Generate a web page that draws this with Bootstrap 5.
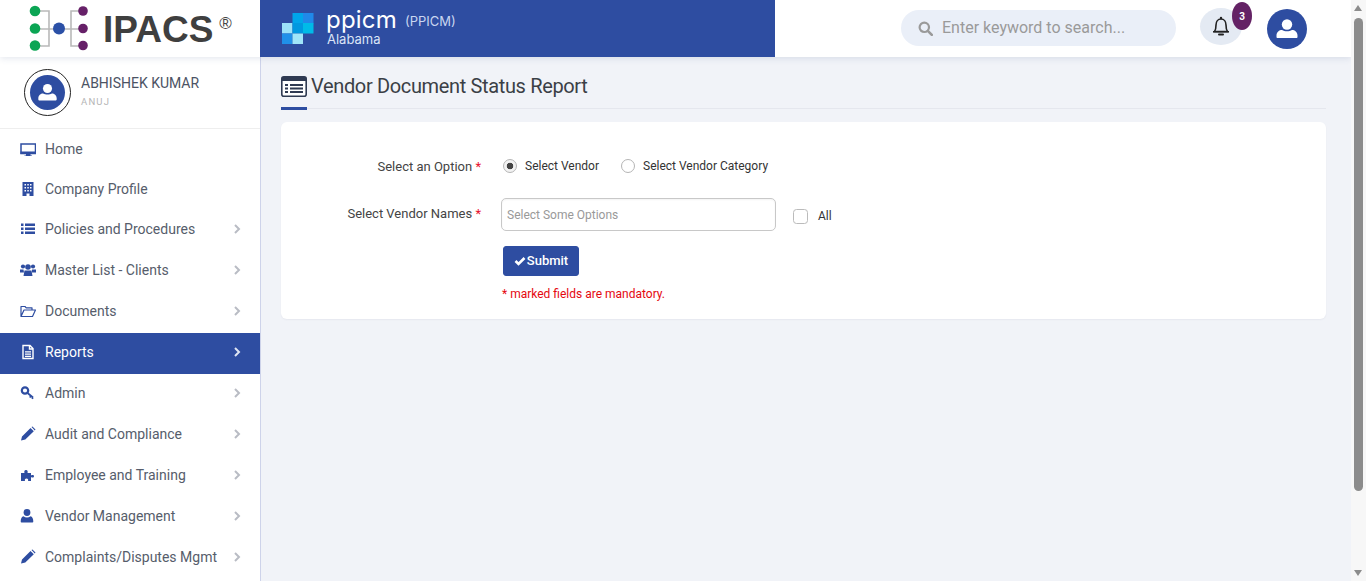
<!DOCTYPE html>
<html lang="en">
<head>
<meta charset="utf-8">
<title>Vendor Document Status Report</title>
<link href="https://cdn.jsdelivr.net/npm/bootstrap@5.3.0/dist/css/bootstrap.min.css" rel="stylesheet">
<style>
html,body{height:581px;overflow:hidden}
body{font-family:Roboto,"Liberation Sans",sans-serif;background:#f1f3f8;color:#444;font-size:14px}
.shell{height:581px}
.page-col{width:1351px;height:581px}
.top-bar{height:57px;background:#fff;box-shadow:0 2px 6px rgba(60,80,130,.12);position:relative;z-index:2}
.logo-box{width:260px;padding-left:28px;gap:5px}
.logo-word{font-family:"Liberation Sans",sans-serif;font-weight:700;font-size:37px;line-height:1;color:#3f3f3f;margin-top:1px}
.logo-reg{font-size:17px;line-height:1;color:#444;margin-top:-10px;margin-left:1px;font-family:"Liberation Sans",sans-serif}
.brand-box{width:515px;background:#2e4da1;color:#fff;padding-left:22px;gap:12px}
.brand-main{font-family:Inter,sans-serif;font-size:24px;line-height:24px;letter-spacing:.2px;margin-top:-3px}
.brand-sub{font-family:Inter,sans-serif;font-size:13px;color:#c9d6f0;margin-left:8px}
.brand-state{font-family:Inter,sans-serif;font-size:13px;line-height:14px;margin-left:1px;color:#dbe4f6}
.search-pill{width:275px;height:36px;background:#eaeff8;border-radius:18px;margin-left:126px;padding-left:17px;gap:9px;color:#9a9a9a;font-size:16px;margin-top:-1px}
.bell-wrap{width:42px;height:37px;background:#e4eaf3;border-radius:50%;margin-left:24px;margin-top:5px}
.bell-badge{position:absolute;left:32px;top:-6px;width:20px;height:28px;border-radius:50%;background:#642265;color:#fff;font-size:10px;font-weight:700;display:flex;align-items:center;justify-content:center}
.user-round{width:40px;height:40px;border-radius:50%;background:#2e4da1;margin-left:25px;margin-top:1px}
.side-col{width:261px;background:#fff;border-right:1px solid #ced3ea;height:524px}
.who{height:72px;border-bottom:1px solid #eee;padding-left:24px;gap:10px}
.who-ring{width:47px;height:47px;border:1px solid #222;border-radius:50%;background:#fff}
.who-disc{width:35px;height:35px;border-radius:50%;background:#2e4da1}
.who-name{font-size:14px;line-height:16px;color:#4c5364;margin-top:-3px}
.who-role{font-size:9.5px;letter-spacing:1.2px;color:#b5b5b5;margin-top:5px;line-height:12px}
.menu-row{height:40px;padding:0 20px;color:#565d6b;text-decoration:none;font-size:14px}
.menu-row.sub{height:41px;padding-bottom:3px}
.menu-row.first-sub{margin-top:1px}
.menu-row.on{background:#2e4da1;color:#fff}
.menu-ico{width:16px;height:16px;margin-right:9px;flex:none;color:#2e4da1}
.menu-row.on .menu-ico{color:#fff}
.menu-arrow{margin-left:auto;width:8px;height:10px;margin-right:-1px;color:#b9bcc4}
.menu-row.on .menu-arrow{color:#dfe5f4}
.work{padding:0 25px 0 20px}
.title-block{height:52px;border-bottom:1px solid #e5e7ee;position:relative;padding-top:15px;gap:4px}
.title-block::after{content:"";position:absolute;left:0;bottom:-2px;width:26px;height:3px;background:#2e4da1}
.title-text{font-size:20px;line-height:28px;color:#3b3f46;letter-spacing:-.35px}
.form-panel{border:0;border-radius:6px;margin-top:13px;height:197px;box-shadow:0 1px 2px rgba(60,70,110,.06);padding:0}
.lbl{width:200px;text-align:right;color:#444;font-size:13px;flex:none}
.req{color:#e8112d}
.opt-row{padding-top:32px;height:76px}
.opt-label{padding-top:5px;line-height:16px}
.opt-radio{margin:3px 0 0 22px;height:22px;gap:8px;font-size:12px;color:#333}
.opt-radio .form-check-input{width:14px;height:14px;margin:2px 0 0;border:1px solid #b5b5b5;background:#fff;box-shadow:none;flex:none}
.opt-radio .form-check-input:checked{background:radial-gradient(circle,#444 0 3px,#f2f2f2 3.6px);border-color:#b5b5b5}
.names-label{padding-top:8px;line-height:16px}
.names-box{width:275px;height:33px;margin-left:20px;border:1px solid #c8c8c8;border-radius:5px;background:#fff;color:#999;font-size:12px;padding:0 5px;box-shadow:inset 0 1px 2px rgba(0,0,0,.05)}
.all-check{width:15px;height:15px;margin:11px 0 0 17px;border:1px solid #bbb;border-radius:1px;background:#fff;box-shadow:none}
.all-label{font-size:12px;margin:10px 0 0 10px;line-height:16px;color:#333}
.go-btn{margin:15px 0 0 222px;width:76px;height:30px;background:#2e4da1;border-color:#2e4da1;color:#fff;font-size:13px;font-weight:500;padding:0;gap:1px;border-radius:3px}
.must{font-size:12px;color:#e5080f;margin:10px 0 0 221px;line-height:16px}
.fake-bar{width:15px;height:581px;background:#f7f7f7;position:relative;z-index:3;flex:none}
.bar-thumb{width:9px;height:473px;background:#8c8c8c;border-radius:5px;margin:18px 0 0 3px}
.bar-up,.bar-down{position:absolute;left:3px;width:0;height:0;border-left:4.5px solid transparent;border-right:4.5px solid transparent}
.bar-up{top:5px;border-bottom:6px solid #8c8c8c}
.bar-down{bottom:5px;border-top:6px solid #8c8c8c}
</style>
</head>
<body>
<svg width="0" height="0" class="position-absolute">
<defs>
<symbol id="i-next" viewBox="0 0 8 10"><path d="M2 1l4 4-4 4" fill="none" stroke="currentColor" stroke-width="2"/></symbol>
<symbol id="i-person" viewBox="0 0 24 24"><circle cx="12" cy="7.5" r="5.2" fill="#fff"/><path d="M2.5 21c-.5 0-1-.4-1-1v-1.500c0-3.500 2.800-5.500 5.500-5.500 1.500.8 3 1.300 5 1.300s3.500-.5 5-1.300c2.700 0 5.500 2 5.500 5.500V20c0 .6-.5 1-1 1z" fill="#fff"/></symbol>
</defs>
</svg>
<div class="shell d-flex">
<div class="page-col d-flex flex-column">
<header class="top-bar d-flex flex-none">
  <div class="logo-box d-flex align-items-center">
    <svg width="70" height="50" viewBox="0 0 70 50" class="flex-none">
      <g fill="none" stroke="#b9b9b9" stroke-width="1.600">
        <path d="M7 7h14v35H7M7 25h50M57 7H43v35h14"/>
      </g>
      <g fill="#0ba554"><circle cx="7" cy="7" r="5.300"/><circle cx="7" cy="24.500" r="5.300"/><circle cx="7" cy="41.500" r="5.300"/></g>
      <circle cx="31" cy="24.500" r="6" fill="#2b50a6"/>
      <g fill="#662068"><circle cx="55" cy="7" r="4.800"/><circle cx="55" cy="24.500" r="4.800"/><circle cx="55" cy="41.500" r="4.800"/></g>
    </svg>
    <span class="logo-word">IPACS</span><span class="logo-reg">®</span>
  </div>
  <div class="brand-box d-flex align-items-center">
    <svg width="32" height="31" viewBox="0 0 32 31" class="flex-none">
      <rect x="10.500" width="10.500" height="10.500" fill="#00a5ea"/><rect x="21" width="10.500" height="10.500" fill="#2089e9"/>
      <rect y="10" width="10.500" height="10.500" fill="#9be2f9"/><rect x="10.500" y="10" width="10.500" height="10.500" fill="#0098e0"/><rect x="21" y="10" width="10.500" height="10.500" fill="#00bbe8"/>
      <rect y="20.500" width="10.500" height="10.500" fill="#2090e9"/><rect x="10.500" y="20.500" width="10.500" height="10.500" fill="#a0e5f9"/>
    </svg>
    <div>
      <div class="d-flex align-items-center"><span class="brand-main">ppicm</span><span class="brand-sub">(PPICM)</span></div>
      <div class="brand-state">Alabama</div>
    </div>
  </div>
  <div class="search-pill d-flex align-items-center align-self-center">
    <svg width="15" height="15" viewBox="0 0 15 15" class="flex-none"><circle cx="6.300" cy="6.300" r="4.700" fill="none" stroke="#9a9a9a" stroke-width="2.200"/><path d="M9.800 9.800l4 4" stroke="#9a9a9a" stroke-width="2.600" stroke-linecap="round"/></svg>
    <span>Enter keyword to search...</span>
  </div>
  <div class="bell-wrap position-relative align-self-start mt-2 d-flex align-items-center justify-content-center flex-none">
    <svg width="18" height="21" viewBox="0 0 18 21"><path d="M2.500 15.500c1.200-1.500 1.500-3 1.500-6.500C4 5.500 6 3 9 3s5 2.500 5 6c0 3.500.3 5 1.500 6.500z" fill="none" stroke="#222" stroke-width="1.600" stroke-linejoin="round"/><path d="M1 15.800h16" stroke="#222" stroke-width="1.600"/><circle cx="9" cy="2" r="1.200" fill="#222"/><path d="M7 18.500h4" stroke="#222" stroke-width="2" stroke-linecap="round"/></svg>
    <span class="bell-badge">3</span>
  </div>
  <div class="user-round align-self-center d-flex align-items-center justify-content-center flex-none"><svg width="24" height="24"><use href="#i-person"/></svg></div>
</header>
<div class="d-flex flex-grow-1">
<aside class="side-col flex-none">
  <div class="who d-flex align-items-center">
    <div class="who-ring d-flex align-items-center justify-content-center flex-none"><div class="who-disc d-flex align-items-center justify-content-center"><svg width="21" height="21"><use href="#i-person"/></svg></div></div>
    <div><div class="who-name">ABHISHEK KUMAR</div><div class="who-role">ANUJ</div></div>
  </div>
  <nav class="d-flex flex-column">
    <a class="menu-row d-flex align-items-center" href="#"><svg class="menu-ico" viewBox="0 0 16 16"><path d="M1 3h14.500v9.500H1z" fill="none" stroke="currentColor" stroke-width="1.500"/><path d="M.5 10.500h15.500v2.500H.5zM6 13h4.500v1.500H12V15H4.500v-.5H6z" fill="currentColor"/></svg>Home</a>
    <a class="menu-row d-flex align-items-center" href="#"><svg class="menu-ico" viewBox="0 0 16 16"><path fill-rule="evenodd" d="M2.500 1h11v14h-4v-2.500h-3V15h-4zM4.500 3v1.500H6V3zM7.300 3v1.500h1.500V3zM10 3v1.500h1.500V3zM4.500 6v1.500H6V6zM7.300 6v1.500h1.500V6zM10 6v1.500h1.500V6zM4.500 9v1.500H6V9zM7.300 9v1.500h1.500V9zM10 9v1.500h1.500V9z" fill="currentColor"/></svg>Company Profile</a>
    <a class="menu-row sub first-sub d-flex align-items-center" href="#"><svg class="menu-ico" viewBox="0 0 16 16"><path d="M1 2.500h2.500V5H1zM5 2.500h10V5H5zM1 6.500h2.500V9H1zM5 6.500h10V9H5zM1 10.500h2.500V13H1zM5 10.500h10V13H5z" fill="currentColor"/></svg>Policies and Procedures<svg class="menu-arrow"><use href="#i-next"/></svg></a>
    <a class="menu-row sub d-flex align-items-center" href="#"><svg class="menu-ico" viewBox="0 0 16 16"><circle cx="3" cy="4.500" r="2.100" fill="currentColor"/><circle cx="13" cy="4.500" r="2.100" fill="currentColor"/><circle cx="8" cy="5" r="2.800" fill="currentColor"/><path d="M0 7.500h3.500l.5 3H0zM12 7.500h4v3h-4zM4.500 8.500h7l1 5.500h-9z" fill="currentColor"/></svg>Master List - Clients<svg class="menu-arrow"><use href="#i-next"/></svg></a>
    <a class="menu-row sub d-flex align-items-center" href="#"><svg class="menu-ico" viewBox="0 0 16 16"><path d="M1 13.500V3.500h4l1.200 1.300H12V7M1 13.500h11.500L15.500 7H4z" fill="none" stroke="currentColor" stroke-width="1.200" stroke-linejoin="round"/></svg>Documents<svg class="menu-arrow"><use href="#i-next"/></svg></a>
    <a class="menu-row sub on d-flex align-items-center" href="#"><svg class="menu-ico" viewBox="0 0 16 16"><path d="M3 1.500h7l3 3v10H3zM9.500 2v3h3" fill="none" stroke="currentColor" stroke-width="1.400"/><path d="M5 7.200h6v1.200H5zM5 9.500h6v1.200H5zM5 11.700h6v1.200H5z" fill="currentColor"/></svg>Reports<svg class="menu-arrow"><use href="#i-next"/></svg></a>
    <a class="menu-row sub d-flex align-items-center" href="#"><svg class="menu-ico" viewBox="0 0 16 16"><circle cx="5" cy="5.500" r="3.200" fill="none" stroke="currentColor" stroke-width="2.200"/><path d="M7.500 8l5.500 4.500M11 11l-1.300 1.500M13 12.500l-1 1.300" stroke="currentColor" stroke-width="1.800" fill="none"/></svg>Admin<svg class="menu-arrow"><use href="#i-next"/></svg></a>
    <a class="menu-row sub d-flex align-items-center" href="#"><svg class="menu-ico" viewBox="0 0 16 16"><path d="M1 14.500l1-4L10.500 2l3.300 3.300L5.300 13.500zM11.500 1l1-.5 3 3-.7 1z" fill="currentColor"/></svg>Audit and Compliance<svg class="menu-arrow"><use href="#i-next"/></svg></a>
    <a class="menu-row sub d-flex align-items-center" href="#"><svg class="menu-ico" viewBox="0 0 16 16"><path d="M1 6h3.500C4 4.500 4.300 3 6 3s2 1.500 1.500 3H11v2.500c1.500-.8 3-.6 3 .8s-1.500 1.700-3 .8V14H8c.5-1.500 0-2.500-1.500-2.500S4.500 12.500 5 14H1z" fill="currentColor"/></svg>Employee and Training<svg class="menu-arrow"><use href="#i-next"/></svg></a>
    <a class="menu-row sub d-flex align-items-center" href="#"><svg class="menu-ico" viewBox="0 0 16 16"><circle cx="7" cy="4.500" r="3.400" fill="currentColor"/><path d="M1.500 14.500c-.5 0-.8-.4-.8-.9 0-3 1-5.100 2.800-5.400 1 .8 2.200 1.200 3.500 1.200s2.500-.4 3.500-1.200c1.800.3 2.800 2.400 2.800 5.400 0 .5-.3.900-.8.900z" fill="currentColor"/></svg>Vendor Management<svg class="menu-arrow"><use href="#i-next"/></svg></a>
    <a class="menu-row sub d-flex align-items-center" href="#"><svg class="menu-ico" viewBox="0 0 16 16"><path d="M1 14.500l1-4L10.500 2l3.300 3.300L5.300 13.500zM11.500 1l1-.5 3 3-.7 1z" fill="currentColor"/></svg>Complaints/Disputes Mgmt<svg class="menu-arrow"><use href="#i-next"/></svg></a>
  </nav>
</aside>
<main class="work flex-grow-1">
  <div class="title-block d-flex">
    <svg width="26" height="21" viewBox="0 0 26 21" class="flex-none mt-1"><rect x=".8" y=".8" width="24.400" height="19.400" rx="2" fill="#fff" stroke="#2f3a52" stroke-width="1.600"/><path d="M1 1h24v4H1z" fill="#2f3a52"/><path d="M4 8h3v2H4zM9 8h13v2H9zM4 11.500h3v2H4zM9 11.500h13v2H9zM4 15h3v2H4zM9 15h13v2H9z" fill="#2f3a52"/></svg>
    <h1 class="title-text fw-normal m-0">Vendor Document Status Report</h1>
  </div>
  <form class="card form-panel">
    <div class="d-flex opt-row">
      <div class="lbl opt-label">Select an Option <span class="req">*</span></div>
      <label class="opt-radio d-flex"><input class="form-check-input" type="radio" name="pick" checked>Select Vendor</label>
      <label class="opt-radio d-flex"><input class="form-check-input" type="radio" name="pick">Select Vendor Category</label>
    </div>
    <div class="d-flex">
      <div class="lbl names-label">Select Vendor Names <span class="req">*</span></div>
      <div class="names-box d-flex align-items-center">Select Some Options</div>
      <input class="form-check-input all-check" type="checkbox">
      <div class="all-label">All</div>
    </div>
    <button type="button" class="btn go-btn d-flex align-items-center justify-content-center">
      <svg width="12" height="10" viewBox="0 0 12 10"><path d="M1.500 5l3 3L10.500 2" fill="none" stroke="#fff" stroke-width="2.600"/></svg>Submit
    </button>
    <div class="must">* marked fields are mandatory.</div>
  </form>
</main>
</div>
</div>
<div class="fake-bar"><div class="bar-up"></div><div class="bar-thumb"></div><div class="bar-down"></div></div>
</div>
<script src="https://cdn.jsdelivr.net/npm/bootstrap@5.3.0/dist/js/bootstrap.bundle.min.js"></script>
</body>
</html>
